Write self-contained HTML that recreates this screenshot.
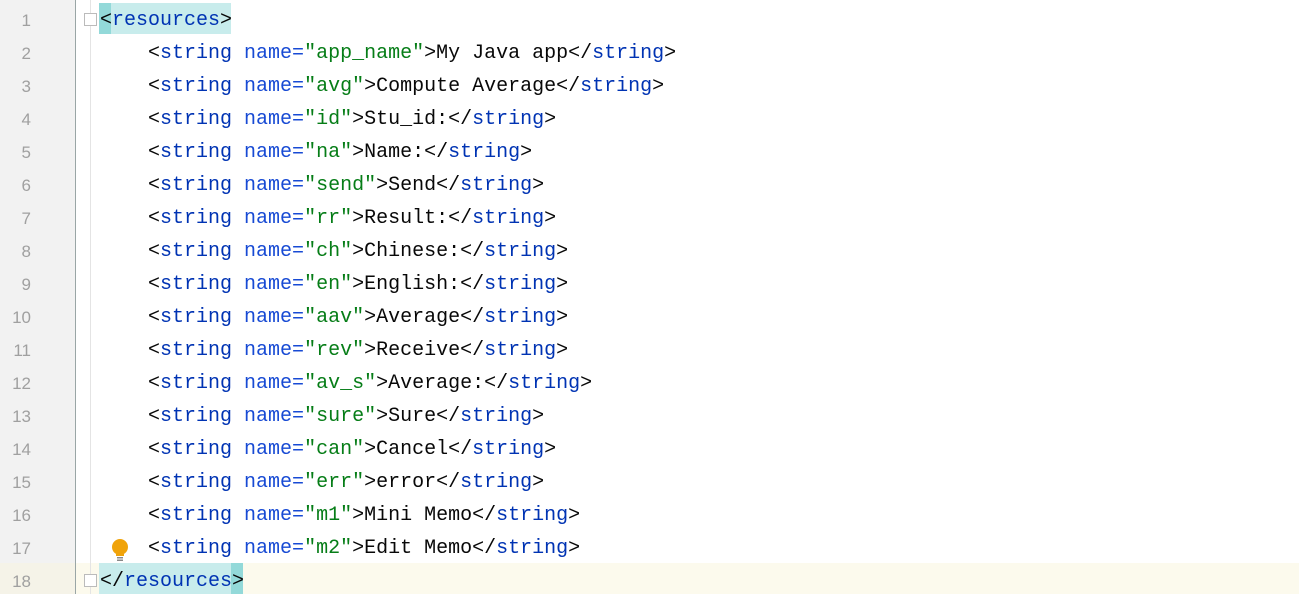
<!DOCTYPE html>
<html><head><meta charset="utf-8"><style>
body{margin:0;width:1299px;height:594px;background:#fff;position:relative;overflow:hidden;font-family:"Liberation Mono",monospace;}
.g{position:absolute;left:0;top:0;width:75px;height:594px;background:#f2f2f2;}
.sep{position:absolute;left:75px;top:0;width:1px;height:594px;background:#9aa6a6;}
.sep2{position:absolute;left:90px;top:0;width:1px;height:594px;background:#e4e4e4;}
.cur{position:absolute;left:0;top:563px;width:1299px;height:31px;background:#fcfaed;}
.n{position:absolute;left:0;width:31px;text-align:right;font-size:17px;color:#a0a0a0;font-family:"Liberation Sans",sans-serif;}
.l{position:absolute;left:100px;font-size:20px;white-space:pre;color:#080808;line-height:33px;}
.t{color:#0033b3}.a{color:#174ad4}.v{color:#067d17}
.hl{position:absolute;height:31px;background:#c8ecec;}
.hd{position:absolute;height:31px;background:#93d9d9;}
.fold{position:absolute;left:84px;width:11px;height:11px;border:1px solid #bbb;background:#fff;}
</style></head><body>
<div class="cur"></div>
<div class="g"></div>
<div class="cur" style="width:75px;background:#f5f3e8"></div>
<div class="sep"></div><div class="sep2"></div>
<div class="hl" style="left:99px;top:3px;width:132px"></div>
<div class="hd" style="left:99px;top:3px;width:12px"></div>
<div class="hl" style="left:99px;top:563px;width:144px"></div>
<div class="hd" style="left:231px;top:563px;width:12px"></div>
<div class="fold" style="top:13px"></div>
<div class="fold" style="top:574px"></div>
<svg style="position:absolute;left:111px;top:538px" width="18" height="24"><circle cx="9" cy="9" r="8" fill="#f0a30a"/><rect x="5" y="16" width="8" height="2" fill="#f0a30a"/><rect x="6" y="19" width="6" height="1.5" fill="#888"/><rect x="6" y="21.5" width="6" height="1.5" fill="#888"/></svg>
<div id="c"></div>
<script>
var rows=[["app_name","My Java app"],["avg","Compute Average"],["id","Stu_id:"],["na","Name:"],["send","Send"],["rr","Result:"],["ch","Chinese:"],["en","English:"],["aav","Average"],["rev","Receive"],["av_s","Average:"],["sure","Sure"],["can","Cancel"],["err","error"],["m1","Mini Memo"],["m2","Edit Memo"]];
var h="";
for(var i=0;i<18;i++){var y=3+33*i;h+='<div class="n" style="top:'+(y+8)+'px">'+(i+1)+'</div>';
var s;if(i==0)s='&lt;<span class="t">resources</span>&gt;';else if(i==17)s='&lt;/<span class="t">resources</span>&gt;';
else{var r=rows[i-1];s='    &lt;<span class="t">string</span> <span class="a">name=</span><span class="v">"'+r[0]+'"</span>&gt;'+r[1]+'&lt;/<span class="t">string</span>&gt;';}
h+='<div class="l" style="top:'+(y+1)+'px">'+s+'</div>';}
document.getElementById("c").innerHTML=h;
</script>
</body></html>
